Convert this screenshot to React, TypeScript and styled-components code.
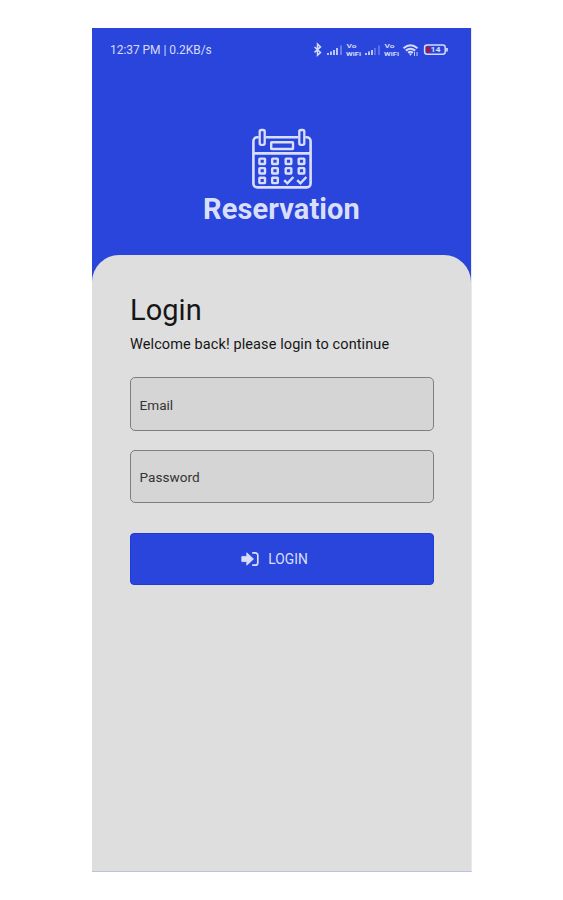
import React from "react";
import styled, { createGlobalStyle } from "styled-components";

const GlobalStyle = createGlobalStyle`
  * { box-sizing: border-box; }
  body { margin: 0; background: #fff; font-family: Roboto, sans-serif; }
`;

const Page = styled.main`
  width: 563px;
  height: 900px;
  padding: 28px 91px 28px 92px;
  background: #fff;
`;

const Phone = styled.div`
  display: flex;
  flex-direction: column;
  width: 380px;
  height: 844px;
  background: #2945dc;
  border-right: 1px solid #e9e9ec;
  border-bottom: 1px solid #b9c2e3;
`;

const StatusBar = styled.header`
  display: flex;
  align-items: center;
  justify-content: space-between;
  height: 44px;
  padding: 0 21px 0 18px;
  color: #d5dbfa;
`;

const Clock = styled.span`
  font-size: 12px;
  line-height: 16px;
  letter-spacing: -0.05px;
  white-space: nowrap;
`;

const Indicators = styled.div`
  display: flex;
  svg { display: block; }
`;

const Brand = styled.div`
  display: flex;
  flex-direction: column;
  align-items: center;
  height: 183px;
  padding-top: 56px;
  color: #d9dffb;
`;

const BrandName = styled.h1`
  margin: 2px 0 0;
  font-size: 29px;
  line-height: 34px;
  font-weight: 700;
  letter-spacing: 0.1px;
`;

const Sheet = styled.section`
  flex: 1;
  padding: 38px 37px 0 38px;
  border-radius: 27px 27px 0 0;
  background: #dedede;
  color: #161616;
`;

const Title = styled.h2`
  margin: 0;
  font-size: 29px;
  line-height: 34px;
  font-weight: 400;
  letter-spacing: 0.05px;
`;

const Subtitle = styled.p`
  margin: 8px 0 22px;
  font-size: 14.5px;
  line-height: 20px;
  letter-spacing: 0.1px;
  white-space: nowrap;
`;

const Field = styled.input<{ $height: number; $gap: number }>`
  display: block;
  width: 304px;
  height: ${(p) => p.$height}px;
  margin: 0 0 ${(p) => p.$gap}px;
  padding: 1px 8.5px 0;
  border: 1px solid #7e7e7e;
  border-radius: 5px;
  outline: 0;
  background: #d5d5d5;
  font: 400 13.6px Roboto, sans-serif;
  &::placeholder { color: #343434; opacity: 1; }
`;

const LoginButton = styled.button`
  display: flex;
  align-items: center;
  justify-content: center;
  gap: 9px;
  width: 304px;
  height: 52px;
  padding: 0 15px 1px 0;
  border: 1px solid #1f3bd6;
  border-radius: 4px;
  background: #2945dc;
  color: #d9dffb;
  font: 400 13.8px Roboto, sans-serif;
`;

const StatusIcons = () => (
  <Indicators>
    <svg width="138" height="16" viewBox="312 42 138 16" fill="none" stroke="currentColor">
      <path d="M314.5 47l6 5.5-3 2.8v-11.2l3 2.8-6 5.5" strokeWidth="1.5" />
      <g strokeWidth="1.7">
        <path d="M328 53v2M331 51.5v3.5M334 50v5M337 48v7M366 53v2M369 51.5v3.5M372 50v5" />
        <path d="M341 45.5v9.5" opacity=".45" />
        <path d="M375 48v7M379 45.5v9.5" opacity=".35" />
      </g>
      <g fill="currentColor" stroke="none" fontFamily="Roboto, sans-serif" fontWeight="700" fontSize="5.8">
        <text x="346.5" y="48.4" textLength="10" lengthAdjust="spacingAndGlyphs">Vo</text>
        <text x="346" y="55.8" textLength="15" lengthAdjust="spacingAndGlyphs">WiFi</text>
        <text x="384.5" y="48.4" textLength="10" lengthAdjust="spacingAndGlyphs">Vo</text>
        <text x="384" y="55.8" textLength="15" lengthAdjust="spacingAndGlyphs">WiFi</text>
      </g>
      <path d="M403.5 48.2q7-5.8 14 0M405.8 50.6q4.7-3.8 9.4 0M408.1 52.8q2.4-2 4.8 0" strokeWidth="2" />
      <path d="M408.8 53.4h3.4l-1.7 2.4z" fill="currentColor" stroke="none" />
      <path d="M414.5 52v4M417 52v4" strokeWidth=".9" />
      <rect x="424.6" y="45" width="20.6" height="9.2" rx="2.5" strokeWidth="1.5" />
      <path d="M447 48v3.4" strokeWidth="1.7" />
      <rect x="426.2" y="46.6" width="4.3" height="6" fill="#a81743" stroke="none" />
      <text x="430.5" y="52.4" fill="currentColor" stroke="none" fontFamily="Roboto, sans-serif" fontWeight="700" fontSize="7.5" textLength="10" lengthAdjust="spacingAndGlyphs">14</text>
    </svg>
  </Indicators>
);

const columns = [262.2, 275, 288.5, 301.5];
const rows = [161.3, 170.8, 180.4];

const CalendarIcon = () => (
  <svg width="60" height="62" viewBox="252 128 60 62" fill="none" stroke="currentColor" strokeWidth="2.6">
    <path d="M258.7 137.2h-1.5a3.8 3.8 0 0 0-3.8 3.8v42.6a3.8 3.8 0 0 0 3.8 3.8h49.6a3.8 3.8 0 0 0 3.8-3.8V141a3.8 3.8 0 0 0-3.8-3.8h-1.5M265.7 137.2h32.6M253.4 153.4h57.2" />
    <rect x="259.7" y="130" width="5" height="14.8" rx="1.6" strokeWidth="2.3" />
    <rect x="299.3" y="130" width="5" height="14.8" rx="1.6" strokeWidth="2.3" />
    <rect x="271.2" y="142.3" width="21.8" height="6.7" rx=".5" strokeWidth="2.4" />
    {rows.map((y, r) =>
      columns.map((x, c) =>
        r === 2 && c > 1 ? (
          <path key={`${r}-${c}`} d={`M${x - 4.3} ${y - 0.2}l3.2 3.2 6-6.4`} strokeWidth="2.4" />
        ) : (
          <rect key={`${r}-${c}`} x={x - 2.8} y={y - 2.7} width="5.6" height="5.4" rx=".5" strokeWidth="2.4" />
        ),
      ),
    )}
  </svg>
);

const LoginIcon = () => (
  <svg width="18" height="16" viewBox="0 0 18 16" fill="currentColor">
    <path d="M.8 5.4h5V1.8L12.5 8l-6.7 6.2v-3.6h-5z" stroke="currentColor" strokeWidth=".8" strokeLinejoin="round" />
    <path d="M11.2 1.8h3.1a2.5 2.5 0 0 1 2.5 2.5v7.4a2.5 2.5 0 0 1-2.5 2.5h-3.1" fill="none" stroke="currentColor" strokeWidth="1.7" />
  </svg>
);

export default function App() {
  return (
    <Page>
      <GlobalStyle />
      <Phone>
        <StatusBar>
          <Clock>12:37 PM | 0.2KB/s</Clock>
          <StatusIcons />
        </StatusBar>
        <Brand>
          <CalendarIcon />
          <BrandName>Reservation</BrandName>
        </Brand>
        <Sheet>
          <Title>Login</Title>
          <Subtitle>Welcome back! please login to continue</Subtitle>
          <Field type="email" placeholder="Email" $height={54} $gap={19} />
          <Field type="password" placeholder="Password" $height={53} $gap={30} />
          <LoginButton type="button">
            <LoginIcon />
            LOGIN
          </LoginButton>
        </Sheet>
      </Phone>
    </Page>
  );
}
